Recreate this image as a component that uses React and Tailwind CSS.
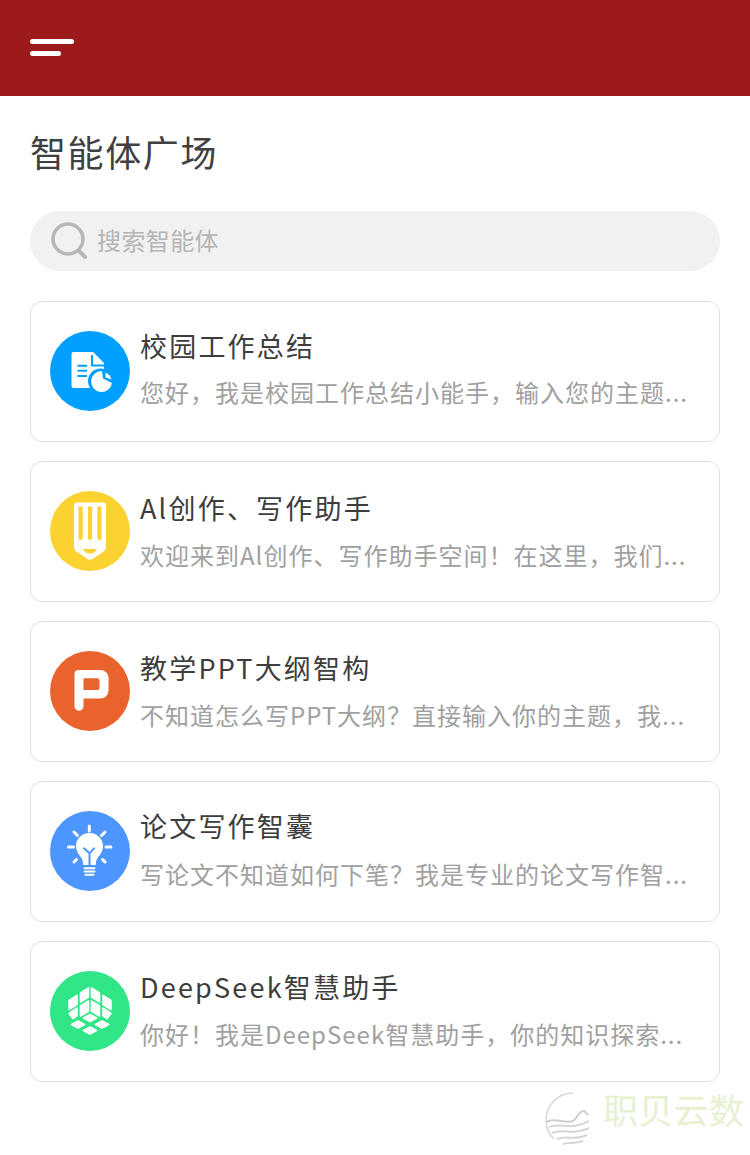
const font = { fontFamily: '"Noto Sans CJK SC", "Noto Sans", sans-serif' };

function DocIcon() {
  return (
    <svg viewBox="0 0 80 80" className="w-20 h-20 shrink-0">
      <circle cx="40" cy="40" r="40" fill="#019fff" />
      <path d="M23.500 21h19.500L54 32v25H23.500a2 2 0 0 1-2-2V23a2 2 0 0 1 2-2Z" fill="#fff" />
      <path d="M42 24v10.500h12" fill="none" stroke="#019fff" strokeWidth="2" />
      <path d="M27.500 33.700h9.500v2h-9.500ZM27.500 38.700h9.500v2h-9.500ZM27.500 44h9.500v2h-9.500Z" fill="#019fff" />
      <circle cx="50.500" cy="50" r="12.500" fill="#019fff" />
      <path d="M52 40A10.500 10.500 0 1 0 62 52L53 47.500Z" fill="#fff" />
      <path d="M55.500 41.500a11 11 0 0 1 6 7l-6-2Z" fill="#fff" />
    </svg>
  );
}
function PencilIcon() {
  return (
    <svg viewBox="0 0 80 80" className="w-20 h-20 shrink-0">
      <circle cx="40" cy="40" r="40" fill="#fbd22f" />
      <path d="M27 11.500h26a3 3 0 0 1 3 3V56c0 2-.7 3.200-2 4.300L43 67.700a5 5 0 0 1-6 0L26 60.300C24.700 59.200 24 58 24 56V14.500a3 3 0 0 1 3-3Z" fill="#fff" />
      <path d="M28.500 15.500h4.200V47a2.100 2.100 0 0 1-4.200 0ZM37.900 15.500h4.200V47a2.100 2.100 0 0 1-4.200 0ZM47.300 15.500h4.200V47a2.100 2.100 0 0 1-4.200 0Z" fill="#fbd22f" />
      <path d="M33 58h14c-1.500 3-4 4.500-7 4.500s-5.500-1.500-7-4.500Z" fill="#fbd22f" />
    </svg>
  );
}
function PIcon() {
  return (
    <svg viewBox="0 0 80 80" className="w-20 h-20 shrink-0">
      <circle cx="40" cy="40" r="40" fill="#ea632d" />
      <path fillRule="evenodd" d="M28.500 19h22a8 8 0 0 1 8 8v12.500a8 8 0 0 1-8 8H33.500v7.700a4.500 4.500 0 0 1-9 0V23a4 4 0 0 1 4-4Zm5 8.300V39h14a2 2 0 0 0 2-2v-7.700a2 2 0 0 0-2-2Z" fill="#fff" />
    </svg>
  );
}
function BulbIcon() {
  return (
    <svg viewBox="0 0 80 80" className="w-20 h-20 shrink-0">
      <circle cx="40" cy="40" r="40" fill="#4d96ff" />
      <path d="M39.500 22c-7.800 0-13.500 6-13.500 13 0 4.500 2 7.500 4 10 1.500 1.800 3 4 3.300 9h12.400c.3-5 1.800-7.200 3.300-9 2-2.500 4-5.500 4-10 0-7-5.700-13-13.500-13Z" fill="#fff" />
      <path d="M34 37.300l5.500 5 4.500-5M39.500 42.300V54" fill="none" stroke="#4d96ff" strokeWidth="2" strokeLinecap="round" strokeLinejoin="round" />
      <path d="M34.500 57.300h10M34.500 60.500h10M35.500 63.800h8" stroke="#fff" strokeWidth="2" strokeLinecap="round" />
      <path d="M39.300 15v5M24 21l3.500 3.500M55 21l-3.500 3.500M18.500 36h5M56 36h5M24 51l2.500-2.500M55 51l-2.500-2.500" stroke="#fff" strokeWidth="3" strokeLinecap="round" />
    </svg>
  );
}
function CubeIcon() {
  return (
    <svg viewBox="0 0 80 80" className="w-20 h-20 shrink-0">
      <circle cx="40" cy="40" r="40" fill="#31e686" />
      <g fill="#fff" stroke="#fff" strokeWidth="1.600" strokeLinejoin="round">
        <path d="M38.500 17v9l-8 5v-9ZM27 24.500v9l-8 5v-9ZM38.500 30v10.300l-8 4.700V35ZM27 37v7.700l-3.800 3L19 42.500Z" />
        <path d="M41.500 17v9l8 5v-9ZM53 24.500v9l8 5v-9ZM41.500 30v10.300l8 4.700V35ZM53 37v7.700l3.800 3 4.200-5.200Z" />
        <path d="M40 43.500l6.500 3.500-6.500 3.500-6.500-3.500ZM28 50l6.500 3.500-6.500 3.500-6.500-3.500ZM52 50l6.500 3.500-6.500 3.500-6.500-3.500ZM40 56l6.500 3.500-6.500 3.500-6.500-3.500Z" />
      </g>
    </svg>
  );
}

const cards = [
  { icon: <DocIcon />, col: "mt-[3px]", gap: "mt-[10px]", title: "校园工作总结", desc: "您好，我是校园工作总结小能手，输入您的主题..." },
  { icon: <PencilIcon />, col: "mt-[5px]", gap: "mt-[11px]", title: "Al创作、写作助手", desc: "欢迎来到Al创作、写作助手空间！在这里，我们..." },
  { icon: <PIcon />, col: "mt-[5px]", gap: "mt-[11px]", title: "教学PPT大纲智构", desc: "不知道怎么写PPT大纲？直接输入你的主题，我..." },
  { icon: <BulbIcon />, col: "mt-[3px]", gap: "mt-[12px]", title: "论文写作智囊", desc: "写论文不知道如何下笔？我是专业的论文写作智..." },
  { icon: <CubeIcon />, col: "mt-[4px]", gap: "mt-[11px]", title: "DeepSeek智慧助手", desc: "你好！我是DeepSeek智慧助手，你的知识探索..." },
];

export default function App() {
  return (
    <div className="relative w-[750px] h-[1155px] overflow-hidden bg-white" style={font}>
      <header className="h-24 bg-[#9d1a1b] flex items-start pl-[30px] pt-[39px]">
        <div className="flex flex-col gap-[7px]">
          <div className="w-11 h-[5px] rounded-full bg-white" />
          <div className="w-[31px] h-[5px] rounded-full bg-white" />
        </div>
      </header>

      <main className="px-[30px]">
        <h1 className="mt-[30px] h-[50px] text-[36px] leading-[50px] tracking-[1.600px] font-normal text-[#404040]">智能体广场</h1>
        <div className="mt-[35px] h-[60px] rounded-[30px] bg-[#f1f1f1] flex items-center pl-5">
          <svg viewBox="0 0 38 38" className="w-[38px] h-[38px] shrink-0" fill="none" stroke="#b7b7b7">
            <circle cx="18" cy="17" r="15" strokeWidth="3.500" />
            <path d="M28.500 28.500 35 35" strokeWidth="4" strokeLinecap="round" />
          </svg>
          <span className="ml-[9px] -mt-[2px] text-2xl tracking-[0.4px] text-[#b5b5b5]">搜索智能体</span>
        </div>

        <ul className="mt-[30px] flex flex-col gap-[19px]">
          {cards.map((c) => (
            <li key={c.title} className="h-[141px] rounded-[12px] border border-[#e0e0e0] flex items-start pl-[19px] pt-[22px]">
              <div className="mt-[7px]">{c.icon}</div>
              <div className={`ml-[10px] min-w-0 flex-1 ${c.col}`}>
                <div className="text-[27px] leading-[38px] tracking-[2.200px] text-[#3d3d3d] whitespace-nowrap">{c.title}</div>
                <div className={`${c.gap} text-[24px] leading-[34px] tracking-[1px] text-[#a0a0a0] whitespace-nowrap`}>{c.desc}</div>
              </div>
            </li>
          ))}
        </ul>
      </main>

      <div className="absolute left-[545px] top-[1092px] flex items-start">
        <svg viewBox="0 0 56 56" className="w-14 h-14 shrink-0 blur-[0.5px]" fill="none">
          <path d="M28 1C13 1 1 13 1 28c0 7 3 15 8 19" stroke="#d8d8d8" strokeWidth="1.500" />
          <path d="M2 30c6-5 20 2 26-1 4-2 6-11 11-10 2 1 3 3 4 4" stroke="#cfcfcf" strokeWidth="2" />
          <path d="M4 35c12-5 22 4 40-6M7 41c12-5 20 3 37-5M12 47c10-4 17 2 30-4M18 52c6-2 12 0 20-3" stroke="#d5d5d5" strokeWidth="2" />
        </svg>
        <span className="ml-[2px] mt-[-5px] text-[35px] leading-[44px] tracking-[0.300px] text-[#e6f1d0]">职贝云数</span>
      </div>
    </div>
  );
}
